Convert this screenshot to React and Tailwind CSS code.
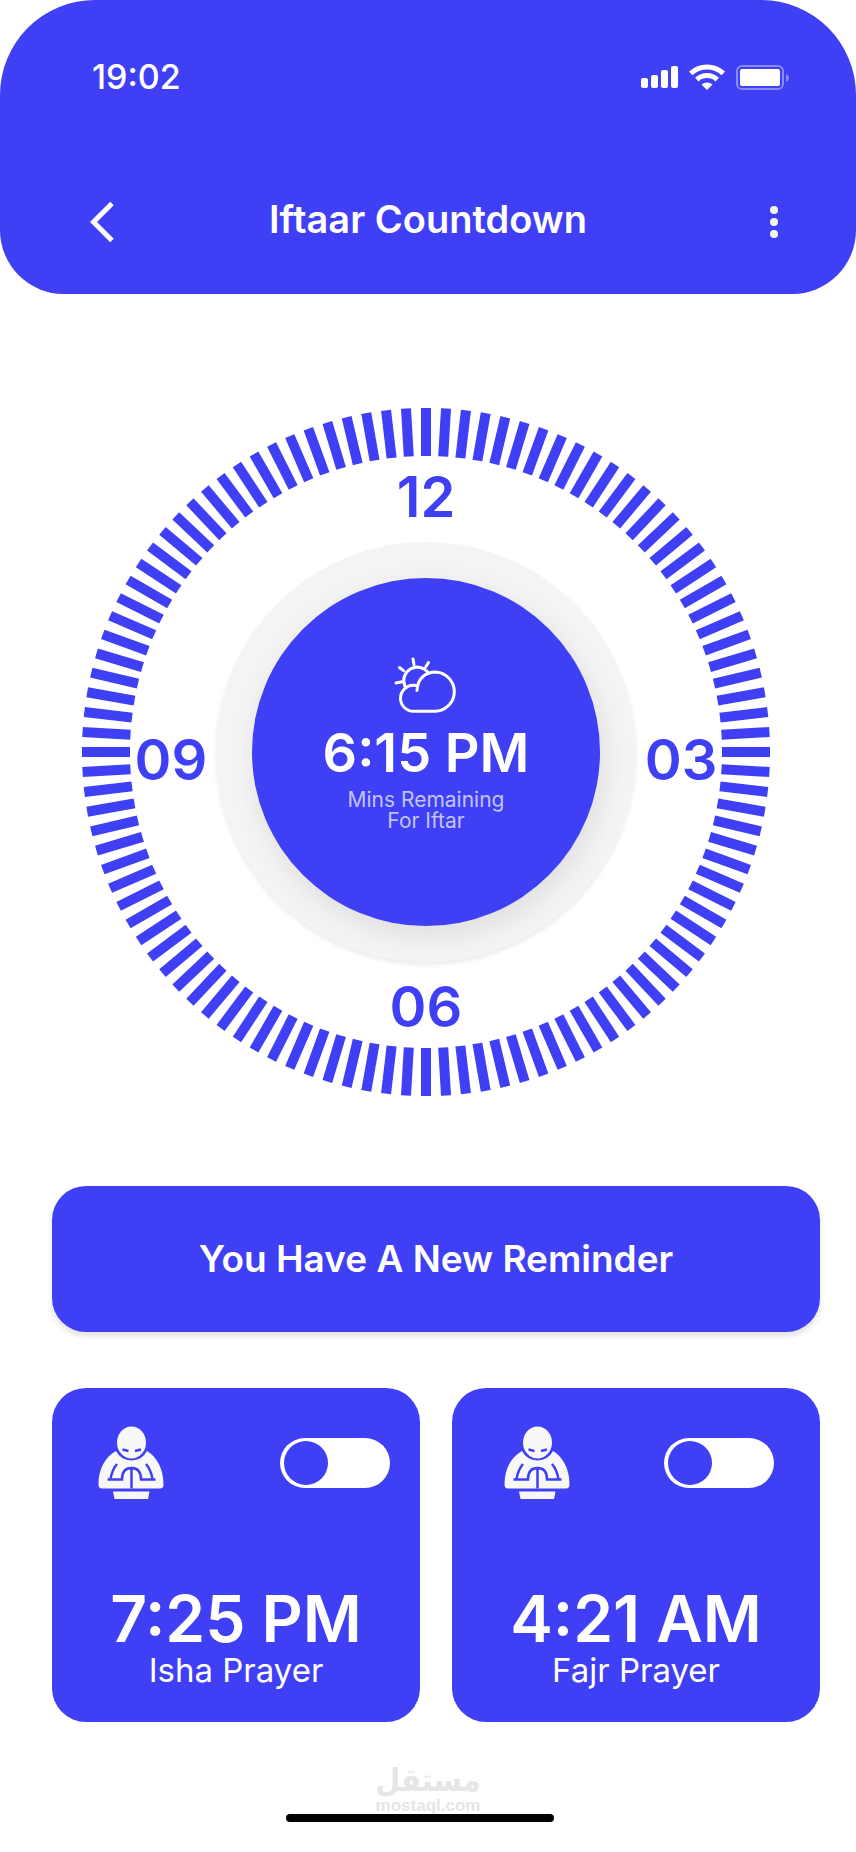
import { useState } from "react";

const TICKS = 108;

const prayers = [
  { id: "isha", time: "7:25 PM", name: "Isha Prayer", row: "pl-[46px] pr-[30px]" },
  { id: "fajr", time: "4:21 AM", name: "Fajr Prayer", row: "pl-[52px] pr-[46px]" },
];

function SignalIcon() {
  return (
    <svg className="h-[22px] w-[37px]" viewBox="0 0 37 22" fill="white">
      <rect x="0" y="12" width="7" height="10" rx="2" />
      <rect x="10" y="9" width="7" height="13" rx="2" />
      <rect x="20" y="4" width="7" height="18" rx="2" />
      <rect x="30" y="0" width="7" height="22" rx="2" />
    </svg>
  );
}

function WifiIcon() {
  return (
    <svg className="h-[26px] w-9" viewBox="0 0 36 26" fill="none" stroke="white" strokeWidth="5">
      <path d="M1.700 9.300A24 24 0 0 1 34.300 9.300" />
      <path d="M7.800 15.600A15 15 0 0 1 28.200 15.600" />
      <path d="M12.500 20.500A8.500 8.500 0 0 1 23.500 20.500L18 26z" fill="white" stroke="none" />
    </svg>
  );
}

function BatteryIcon() {
  return (
    <svg className="h-[25px] w-[54px]" viewBox="0 0 54 25" fill="none">
      <rect x="1" y="1" width="46" height="23" rx="5" stroke="white" strokeOpacity="0.4" strokeWidth="2" />
      <rect x="4" y="4" width="40" height="17" rx="2" fill="white" />
      <path d="M50 9c4 1.500 4 6.500 0 8z" fill="white" fillOpacity="0.4" />
    </svg>
  );
}

function CloudSunIcon() {
  return (
    <svg className="h-14 w-16" viewBox="0 0 64 56" fill="none" stroke="white" strokeWidth="3" strokeLinecap="round" strokeLinejoin="round">
      <path d="M23 33.500C23.500 22 31 15 42 15A19.700 19.700 0 0 1 42 54.300H19.500A13 13 0 0 1 19.500 28.300C21 28.300 22.500 28.500 23.500 29" />
      <path d="M11 29.300A13.500 13.500 0 0 1 34.100 15.600" />
      <path d="M19 2l1 5.500M34.500 5.500l-2.800 4.500M5.500 10.500l4 3.200M2 26l6-1.200" />
    </svg>
  );
}

function PrayIcon() {
  return (
    <svg className="h-[73px] w-[66px]" viewBox="0 0 66 73" fill="none">
      <path d="M18 25C7 31 0.500 43 0.500 58.500Q0.500 62.500 4 62.500H62Q65.500 62.500 65.500 58.500C65.500 43 59 31 49 25A17.500 17.500 0 0 1 18 25z" fill="#f8f8f8" />
      <ellipse cx="33.500" cy="16.500" rx="14.500" ry="16" fill="#f8f8f8" />
      <path d="M15 65.500H51.500L50 73H16.500z" fill="#f8f8f8" />
      <path d="M24.500 23.500l6 1.500M43 23.500l-6 1.500M19 38Q14 44 12.500 53M48 38Q53 44 54.500 53M9.500 53.500H24C24 45 28 42 33.500 42S43 45 43 53.500H57.500M33.500 42V62.500" stroke="#3f3ff5" strokeWidth="2.500" />
    </svg>
  );
}

function ClockRing() {
  return (
    <svg className="col-start-1 row-start-1 w-full" viewBox="0 0 688 688">
      {Array.from({ length: TICKS }, (_, i) => (
        <rect key={i} x="339" y="0" width="10" height="48" fill="#3f3ff5" transform={`rotate(${(i * 360) / TICKS} 344 344)`} />
      ))}
    </svg>
  );
}

function PrayerCard({ prayer }) {
  const [on, setOn] = useState(false);

  return (
    <section className="rounded-[34px] bg-[#3f3ff5] pt-[38px] pb-9 text-white">
      <div className={`flex items-start justify-between ${prayer.row}`}>
        <PrayIcon />
        <label className="mt-3 flex h-[50px] w-[110px] cursor-pointer items-center rounded-full bg-white px-1">
          <input
            type="checkbox"
            role="switch"
            aria-label={prayer.name}
            checked={on}
            onChange={() => setOn(!on)}
            className="size-11 appearance-none rounded-full bg-[#3f3ff5] checked:ml-auto"
          />
        </label>
      </div>
      <div className="mt-[85px] text-center">
        <p className="text-[64px] leading-[70px] font-semibold">{prayer.time}</p>
        <p className="text-[33px] leading-8">{prayer.name}</p>
      </div>
    </section>
  );
}

export default function App() {
  return (
    <div className="flex min-h-screen flex-col bg-white font-['Inter',sans-serif]">
      <header className="rounded-t-[95px] rounded-b-[64px] bg-[#3f3ff5] pt-14 pb-[45px] text-white">
        <div className="flex items-center justify-between pr-[66px] pl-[92px]">
          <p className="text-[34px] leading-[42px] font-medium">19:02</p>
          <div className="flex items-center gap-[11px]">
            <SignalIcon />
            <WifiIcon />
            <BatteryIcon />
          </div>
        </div>
        <nav className="mt-[97px] grid grid-cols-[1fr_auto_1fr] items-center">
          <button aria-label="Back" className="justify-self-start pl-[90px]">
            <svg className="h-10 w-6" viewBox="0 0 24 40" fill="none" stroke="white" strokeWidth="5">
              <path d="M22 1.500L3.500 20L22 38.500" />
            </svg>
          </button>
          <h1 className="pb-1.5 text-[38px] leading-[48px] font-semibold">Iftaar Countdown</h1>
          <button aria-label="More options" className="justify-self-end pr-[78px]">
            <svg className="h-8 w-2" viewBox="0 0 8 32" fill="#f8f8f8">
              <circle cx="4" cy="4" r="4" />
              <circle cx="4" cy="16" r="4" />
              <circle cx="4" cy="28" r="4" />
            </svg>
          </button>
        </nav>
      </header>

      <main className="pr-9 pl-[52px]">
        <div className="mt-[114px] mr-[50px] ml-[30px] grid">
          <ClockRing />
          <div className="col-start-1 row-start-1 grid grid-cols-[1fr_420px_1fr] grid-rows-[1fr_420px_1fr] place-items-center text-[56px] leading-none font-semibold text-[#3f3ff5]">
            <span className="col-start-2 row-start-1 pt-11">12</span>
            <span className="col-start-1 row-start-2 pt-4 pl-11">09</span>
            <div className="col-start-2 row-start-2 grid size-[420px] place-items-center rounded-full bg-[#f4f4f4] shadow-[0_3px_4px_rgba(0,0,0,0.08)]">
              <div className="flex size-[348px] flex-col items-center rounded-full bg-[#3f3ff5] pt-[79px] text-white shadow-[4px_10px_30px_rgba(0,0,0,0.09)]">
                <CloudSunIcon />
                <p className="mt-3 text-[54px] leading-[56px]">6:15 PM</p>
                <p className="mt-2 text-center text-[21px] leading-[21px] font-normal text-white/70">
                  Mins Remaining
                  <br />
                  For Iftar
                </p>
              </div>
            </div>
            <span className="col-start-3 row-start-2 pt-4 pr-11">03</span>
            <span className="col-start-2 row-start-3 pb-11">06</span>
          </div>
        </div>

        <button className="mt-[90px] h-[146px] w-full rounded-[34px] bg-[#3f3ff5] text-[37px] font-semibold text-white shadow-[0_4px_6px_rgba(0,0,0,0.12)]">
          You Have A New Reminder
        </button>

        <div className="mt-14 grid grid-cols-2 gap-8">
          {prayers.map((p) => (
            <PrayerCard key={p.id} prayer={p} />
          ))}
        </div>
      </main>

      <footer className="mt-10 flex flex-col items-center pb-[30px]">
        <p lang="ar" dir="rtl" className="font-['DejaVu_Sans_Condensed','DejaVu_Sans',sans-serif] text-[32px] leading-9 font-bold text-[#e6e6e6]">
          مستقل
        </p>
        <p className="font-['Liberation_Sans',sans-serif] text-[17px] leading-4 font-bold text-[#e6e6e6]">mostaql.com</p>
        <div className="mr-4 h-2 w-[268px] rounded-full bg-black" />
      </footer>
    </div>
  );
}
